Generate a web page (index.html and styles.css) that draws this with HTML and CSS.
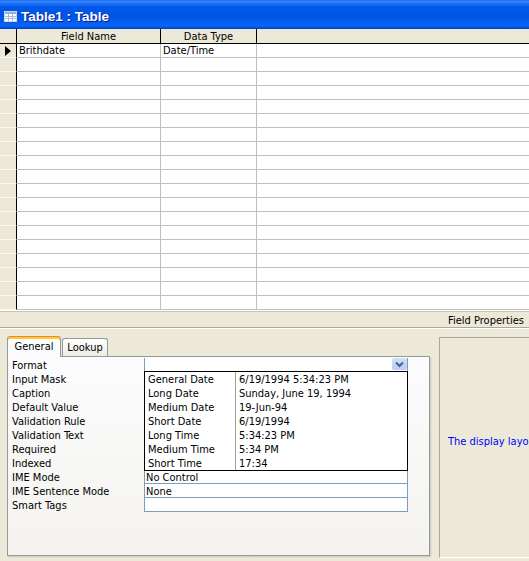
FILE: index.html
```html
<!DOCTYPE html>
<html lang="en">
<head>
    <meta charset="UTF-8">
    <title>Table1 : Table</title>
    <link rel="stylesheet" href="styles.css">
</head>
<body>
<div class="window">
    <div class="titlebar">
        <svg class="title-icon" width="13" height="11" viewBox="0 0 13 11">
            <rect x="0.5" y="0.5" width="12" height="10" fill="#fff" stroke="#c9d6ee"/>
            <rect x="1" y="1" width="11" height="2" fill="#8fb0e8"/>
            <path d="M1 5.5h11M1 7.5h11M4.5 3v7M8.5 3v7" stroke="#a9bde0" stroke-width="1"/>
        </svg>
        <span>Table1 : Table</span>
    </div>

    <div class="grid">
        <div class="row head">
            <div class="sel"></div>
            <div class="c1">Field Name</div>
            <div class="c2">Data Type</div>
            <div class="c3"></div>
        </div>
        <div class="row">
            <div class="sel">
                <svg width="6" height="10" viewBox="0 0 6 10"><path d="M0 0L6 5L0 10Z" fill="#000"/></svg>
            </div>
            <div class="c1">Brithdate</div>
            <div class="c2">Date/Time</div>
            <div class="c3"></div>
        </div>
        <div class="row"><div class="sel"></div><div class="c1"></div><div class="c2"></div><div class="c3"></div></div>
        <div class="row"><div class="sel"></div><div class="c1"></div><div class="c2"></div><div class="c3"></div></div>
        <div class="row"><div class="sel"></div><div class="c1"></div><div class="c2"></div><div class="c3"></div></div>
        <div class="row"><div class="sel"></div><div class="c1"></div><div class="c2"></div><div class="c3"></div></div>
        <div class="row"><div class="sel"></div><div class="c1"></div><div class="c2"></div><div class="c3"></div></div>
        <div class="row"><div class="sel"></div><div class="c1"></div><div class="c2"></div><div class="c3"></div></div>
        <div class="row"><div class="sel"></div><div class="c1"></div><div class="c2"></div><div class="c3"></div></div>
        <div class="row"><div class="sel"></div><div class="c1"></div><div class="c2"></div><div class="c3"></div></div>
        <div class="row"><div class="sel"></div><div class="c1"></div><div class="c2"></div><div class="c3"></div></div>
        <div class="row"><div class="sel"></div><div class="c1"></div><div class="c2"></div><div class="c3"></div></div>
        <div class="row"><div class="sel"></div><div class="c1"></div><div class="c2"></div><div class="c3"></div></div>
        <div class="row"><div class="sel"></div><div class="c1"></div><div class="c2"></div><div class="c3"></div></div>
        <div class="row"><div class="sel"></div><div class="c1"></div><div class="c2"></div><div class="c3"></div></div>
        <div class="row"><div class="sel"></div><div class="c1"></div><div class="c2"></div><div class="c3"></div></div>
        <div class="row"><div class="sel"></div><div class="c1"></div><div class="c2"></div><div class="c3"></div></div>
        <div class="row"><div class="sel"></div><div class="c1"></div><div class="c2"></div><div class="c3"></div></div>
        <div class="row"><div class="sel"></div><div class="c1"></div><div class="c2"></div><div class="c3"></div></div>
        <div class="row"><div class="sel"></div><div class="c1"></div><div class="c2"></div><div class="c3"></div></div>
    </div>

    <div class="band">Field Properties</div>

    <div class="lower">
        <div class="props">
            <div class="tabs">
                <div class="tab active">General</div>
                <div class="tab">Lookup</div>
            </div>
            <div class="panel">
                <div class="labels">
                    <div>Format</div>
                    <div>Input Mask</div>
                    <div>Caption</div>
                    <div>Default Value</div>
                    <div>Validation Rule</div>
                    <div>Validation Text</div>
                    <div>Required</div>
                    <div>Indexed</div>
                    <div>IME Mode</div>
                    <div>IME Sentence Mode</div>
                    <div>Smart Tags</div>
                </div>
                <div class="values">
                    <div class="val format">
                        <span class="drop-btn">
                            <svg width="15" height="12" viewBox="0 0 15 12"><path d="M4 4.5L7.5 8L11 4.5" fill="none" stroke="#4d6185" stroke-width="2"/></svg>
                        </span>
                    </div>
                    <div class="val"></div>
                    <div class="val"></div>
                    <div class="val"></div>
                    <div class="val"></div>
                    <div class="val"></div>
                    <div class="val"></div>
                    <div class="val"></div>
                    <div class="val">No Control</div>
                    <div class="val">None</div>
                    <div class="val"></div>

                    <!-- lista desplegada de formatos -->
                    <div class="droplist">
                        <div class="opt"><span>General Date</span><span>6/19/1994 5:34:23 PM</span></div>
                        <div class="opt"><span>Long Date</span><span>Sunday, June 19, 1994</span></div>
                        <div class="opt"><span>Medium Date</span><span>19-Jun-94</span></div>
                        <div class="opt"><span>Short Date</span><span>6/19/1994</span></div>
                        <div class="opt"><span>Long Time</span><span>5:34:23 PM</span></div>
                        <div class="opt"><span>Medium Time</span><span>5:34 PM</span></div>
                        <div class="opt"><span>Short Time</span><span>17:34</span></div>
                    </div>
                </div>
            </div>
        </div>
        <div class="help">The display layout for the field. Select a pre-defined format or enter a custom format. Press F1 for help on formats.</div>
    </div>
</div>
</body>
</html>
```

FILE: styles.css
```css
* {
    box-sizing: border-box;
}
body {
    margin: 0;
    font-family: "DejaVu Sans Condensed", "DejaVu Sans", sans-serif;
    font-size: 11px;
    color: #000;
    background: #ECE9D8;
}
.window {
    width: 529px;
    height: 561px;
    overflow: hidden;
    display: flex;
    flex-direction: column;
    background: #ECE9D8;
}

/* barra de titulo */
.titlebar {
    flex: none;
    height: 29px;
    display: flex;
    align-items: center;
    gap: 4px;
    padding: 4px 0 0 4px;
    color: #fff;
    font: bold 13.5px "Liberation Sans", Arial, sans-serif;
    text-shadow: 1px 1px 0 #0a1b8c;
    background: linear-gradient(to bottom, #0a5ce8 0, #3d8cff 1px, #2474f8 3px, #0058ea 7px, #0054e3 17px, #0560f2 23px, #0a64f8 26px, #0049d6 28px, #003cc0 29px);
}

/* cuadricula de campos */
.grid {
    flex: none;
    height: 282px;
    overflow: hidden;
    background: #fff;
}
.row {
    display: flex;
    height: 14px;
}
.row > div {
    height: 14px;
    border-bottom: 1px solid #c0c0c0;
    border-right: 1px solid #c0c0c0;
    line-height: 14px;
    padding-left: 2px;
    white-space: nowrap;
    overflow: hidden;
}
.row .sel {
    width: 17px;
    padding: 2px 0 0 5px;
    background: #ECE9D8;
    border-right: 1px solid #000;
    border-bottom-color: #f9f8f3;
}
.c1 {
    width: 144px;
}
.c2 {
    width: 96px;
}
.row .c3 {
    flex: 1;
    border-right: none;
}
.row.head {
    height: 15px;
}
.row.head > div {
    height: 15px;
    background: #ECE9D8;
    border-bottom: 1px solid #000;
    border-right-color: #000;
    text-align: center;
    line-height: 15px;
    padding-left: 0;
}

.band {
    flex: none;
    height: 17px;
    border-top: 1px solid #c8c5b6;
    border-bottom: 1px solid #aca899;
    box-shadow: 0 1px 0 #fff;
    text-align: right;
    padding-right: 5px;
    line-height: 17px;
}

/* zona inferior */
.lower {
    flex: 1;
    display: flex;
    min-height: 0;
}
.props {
    flex: none;
    width: 423px;
    margin: 8px 0 0 7px;
}
.tabs {
    display: flex;
    align-items: flex-end;
    height: 20px;
    position: relative;
    z-index: 1;
}
.tab {
    width: 46px;
    height: 18px;
    margin-left: 1px;
    border: 1px solid #919b9c;
    border-bottom: none;
    border-radius: 3px 3px 0 0;
    background: linear-gradient(#fff, #ecebe5);
    text-align: center;
    line-height: 18px;
}
.tab.active {
    width: 54px;
    height: 21px;
    margin: 0 0 -1px 0;
    border-top: 1px solid #e68b2c;
    box-shadow: inset 0 2px 0 #ffc73c;
    background: #fcfcfe;
    line-height: 20px;
}
.panel {
    height: 200px;
    border: 1px solid #919b9c;
    box-shadow: 1px 1px 0 #d0cebf, 2px 2px 0 #e3e1d5;
    background: linear-gradient(#fcfcfe, #f4f3ee);
    padding: 1px 0 0 4px;
    display: flex;
}
.labels {
    width: 132px;
}
.labels div {
    height: 14px;
    line-height: 16px;
    white-space: nowrap;
}
.values {
    width: 264px;
    position: relative;
}
.val {
    height: 14px;
    background: #fff;
    border: 1px solid #7f9db9;
    border-top: none;
    line-height: 15px;
    padding-left: 1px;
    white-space: nowrap;
}
.val.format {
    display: flex;
    justify-content: flex-end;
    border-bottom: none;
}
.drop-btn {
    width: 15px;
    height: 12px;
    border-radius: 2px;
    background: linear-gradient(#d2defb, #b9cdf6);
    display: block;
}
.drop-btn svg {
    display: block;
}

.droplist {
    position: absolute;
    top: 13px;
    left: 0;
    width: 264px;
    height: 100px;
    border: 1px solid #000;
    background: #fff;
}
.opt {
    display: flex;
    height: 14px;
    line-height: 15px;
    white-space: nowrap;
}
.opt span:first-child {
    width: 91px;
    padding-left: 3px;
    border-right: 1px solid #a0a0a0;
}
.opt span:last-child {
    padding-left: 3px;
}

.help {
    flex: 1;
    height: 221px;
    margin: 9px 0 0 9px;
    border-left: 1px solid #aca899;
    border-top: 1px solid #aca899;
    border-bottom: 1px solid #fff;
    padding: 97px 0 0 8px;
    color: #0000ff;
    white-space: nowrap;
    overflow: hidden;
    line-height: 14px;
}
```
